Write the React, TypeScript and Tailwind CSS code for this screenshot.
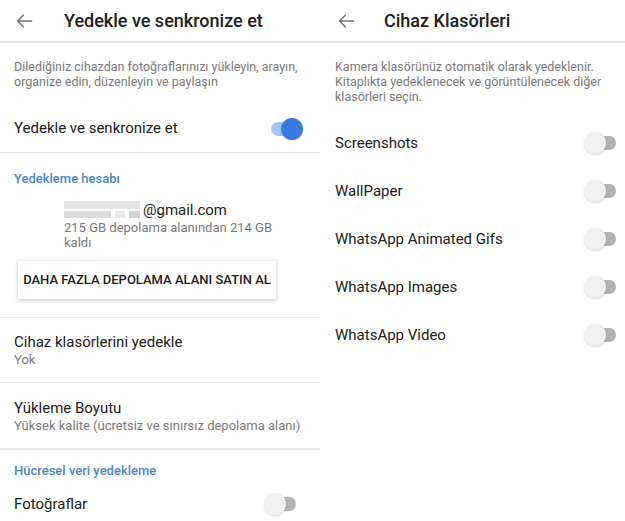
import React from 'react';

function BackArrow() {
  return (
    <svg className="h-5 w-5 text-[#757575]" viewBox="0 0 24 24" fill="none" stroke="currentColor" strokeWidth={1.8}>
      <path d="M20 12H4M10 5l-7 7 7 7" strokeLinecap="round" strokeLinejoin="round" />
    </svg>
  );
}

function Toggle({ on }: { on?: boolean }) {
  if (on) {
    return (
      <div className="relative h-[22px] w-[32px]">
        <div className="absolute left-0 top-[4px] h-[14px] w-[30px] rounded-full bg-[#a9c5f2]" />
        <div className="absolute right-0 top-0 h-[22px] w-[22px] rounded-full bg-[#3a7be2] shadow" />
      </div>
    );
  }
  return (
    <div className="relative h-[22px] w-[32px]">
      <div className="absolute right-0 top-[4px] h-[14px] w-[28px] rounded-full bg-[#b3b3b3]" />
      <div className="absolute left-0 top-0 h-[22px] w-[22px] rounded-full bg-[#f1f1f1] shadow-[0_1px_2px_rgba(0,0,0,0.15)]" />
    </div>
  );
}

const folders = ['Screenshots', 'WallPaper', 'WhatsApp Animated Gifs', 'WhatsApp Images', 'WhatsApp Video'];

export default function App() {
  return (
    <div className="flex h-[521px] w-[625px] overflow-hidden bg-white text-[#212121]" style={{ fontFamily: 'Roboto, "Noto Sans", sans-serif' }}>
      {/* left screen */}
      <div className="flex w-[320px] flex-col">
        <div className="flex h-[43px] items-center border-b-2 border-[#e2e2e2] pl-[15px]">
          <BackArrow />
          <span className="ml-[29px] text-[18px] font-medium">Yedekle ve senkronize et</span>
        </div>
        <p className="px-[14px] pr-[10px] pt-[16px] text-[12.5px] leading-[15px] text-[#7a7a7a]">
          Dilediğiniz cihazdan fotoğraflarınızı yükleyin, arayın, organize edin, düzenleyin ve paylaşın
        </p>
        <div className="mt-[16px] flex h-[48px] items-center justify-between border-b border-[#e6e6e6] px-[14px] pr-[17px]">
          <span className="text-[15px]">Yedekle ve senkronize et</span>
          <Toggle on />
        </div>
        <div className="px-[14px] pt-[16px] text-[13px] font-medium text-[#4a87c4]">Yedekleme hesabı</div>
        <div className="pl-[64px] pt-[12px]">
          <div className="flex items-center">
            <div className="flex h-[17px] w-[76px] flex-col gap-[2px]">
              <div className="h-[8px] w-full bg-[#e4e4e4]" />
              <div className="flex h-[7px] gap-[4px]">
                <div className="w-[50px] bg-[#dcdcdc]" />
                <div className="w-[10px] bg-[#e8e8e8]" />
                <div className="w-[12px] bg-[#d2d2d2]" />
              </div>
            </div>
            <span className="ml-[3px] text-[15px] leading-[18px]">@gmail.com</span>
          </div>
          <p className="mt-[1px] pr-[40px] text-[13px] leading-[15px] text-[#7a7a7a]">
            215 GB depolama alanından 214 GB kaldı
          </p>
        </div>
        <div className="px-[18px] pt-[11px] pb-[18px] pr-[44px]">
          <div className="flex h-[38px] items-center justify-center bg-white text-[13px] font-medium shadow-[0_1px_4px_rgba(0,0,0,0.25)]">
            DAHA FAZLA DEPOLAMA ALANI SATIN AL
          </div>
        </div>
        <div className="border-t border-[#e6e6e6] px-[14px] pt-[15px] pb-[13px]">
          <div className="text-[15px] leading-[18px]">Cihaz klasörlerini yedekle</div>
          <div className="text-[13px] leading-[18px] text-[#7a7a7a]">Yok</div>
        </div>
        <div className="border-t border-[#e6e6e6] px-[14px] pt-[16px] pb-[13px]">
          <div className="text-[15px] leading-[18px]">Yükleme Boyutu</div>
          <div className="text-[13px] leading-[18px] text-[#7a7a7a]">Yüksek kalite (ücretsiz ve sınırsız depolama alanı)</div>
        </div>
        <div className="border-t-2 border-[#e6e6e6] px-[14px] pt-[12px] text-[13px] font-medium leading-[18px] text-[#4a87c4]">
          Hücresel veri yedekleme
        </div>
        <div className="flex items-center justify-between px-[14px] pt-[13px] pr-[24px]">
          <span className="text-[15px]">Fotoğraflar</span>
          <Toggle />
        </div>
      </div>

      {/* right screen */}
      <div className="flex flex-1 flex-col">
        <div className="flex h-[43px] items-center border-b-2 border-[#e2e2e2] pl-[17px]">
          <BackArrow />
          <span className="ml-[27px] text-[18px] font-medium">Cihaz Klasörleri</span>
        </div>
        <p className="px-[15px] pr-[12px] pt-[16px] text-[12.5px] leading-[15px] text-[#7a7a7a]">
          Kamera klasörünüz otomatik olarak yedeklenir. Kitaplıkta yedeklenecek ve görüntülenecek diğer klasörleri seçin.
        </p>
        <div className="flex flex-col pt-[15px]">
          {folders.map((f) => (
            <div key={f} className="flex h-[48px] items-center justify-between pl-[15px] pr-[9px]">
              <span className="text-[15px]">{f}</span>
              <Toggle />
            </div>
          ))}
        </div>
      </div>
    </div>
  );
}
